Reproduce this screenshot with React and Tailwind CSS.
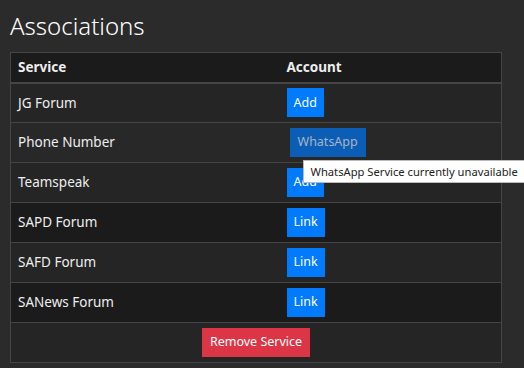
import React from "react";

const rows = [
  { name: "JG Forum", action: "Add", bg: "bg-[#252525]" },
  { name: "Phone Number", action: "WhatsApp", bg: "bg-[#282828]" },
  { name: "Teamspeak", action: "Add", bg: "bg-[#252525]" },
  { name: "SAPD Forum", action: "Link", bg: "bg-[#1b1b1b]" },
  { name: "SAFD Forum", action: "Link", bg: "bg-[#252525]" },
  { name: "SANews Forum", action: "Link", bg: "bg-[#1b1b1b]" },
];

function ActionButton({ label }) {
  if (label === "WhatsApp") {
    return (
      <span className="relative inline-block ml-[3px]">
        <button
          disabled
          className="h-[29px] px-[8px] bg-[#0b5db5] text-[#a8b4c4] text-[12.5px] leading-none"
        >
          WhatsApp
        </button>
        <span className="absolute left-[13px] top-[32px] z-10 whitespace-nowrap bg-white text-[#222] text-[11.2px] leading-none pl-[7px] pr-[16px] py-[5px] border border-[#bbb]">
          WhatsApp Service currently unavailable
        </span>
      </span>
    );
  }
  return (
    <button className="h-[29px] px-[7px] bg-[#007bff] text-white text-[12.5px] leading-none">
      {label}
    </button>
  );
}

export default function App() {
  return (
    <div
      className="w-[524px] h-[368px] overflow-hidden bg-[#2b2b2b] text-[#eee] pt-[12px] px-[10px]"
      style={{ fontFamily: '"Noto Sans", "Open Sans", sans-serif' }}
    >
      <h1 className="text-[24px] leading-none font-light text-white mb-[14px] mt-[2px]">
        Associations
      </h1>
      <table className="w-[492px] border-collapse border border-[#454545] text-[13.5px]">
        <thead>
          <tr className="bg-[#1b1b1b] border-b-2 border-[#454545]">
            <th className="w-[269px] h-[30px] text-left font-bold pl-[7px]">Service</th>
            <th className="text-left font-bold pl-[7px]">Account</th>
          </tr>
        </thead>
        <tbody>
          {rows.map((r) => (
            <tr key={r.name} className={`${r.bg} border-b border-[#454545]`}>
              <td className="h-[40px] pl-[7px]">{r.name}</td>
              <td className="pl-[7px]">
                <ActionButton label={r.action} />
              </td>
            </tr>
          ))}
          <tr className="bg-[#252525]">
            <td colSpan={2} className="h-[40px] text-center">
              <button className="h-[29px] px-[8px] bg-[#dc3545] text-white text-[12.5px] leading-none">
                Remove Service
              </button>
            </td>
          </tr>
        </tbody>
      </table>
    </div>
  );
}
